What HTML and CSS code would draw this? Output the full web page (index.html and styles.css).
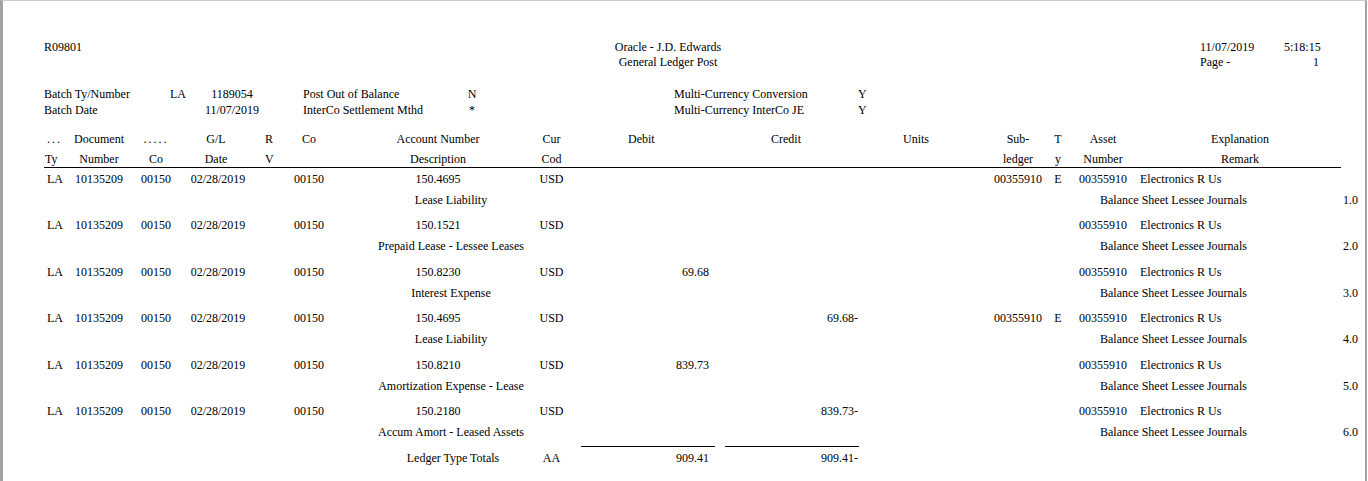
FILE: index.html
```html
<!DOCTYPE html>
<html>
<head>
<meta charset="utf-8">
<title>General Ledger Post</title>
<link rel="stylesheet" href="styles.css">
</head>
<body>
<div class="page">
  <header class="rpt-head">
    <div class="rh-left">R09801</div>
    <div class="rh-center">
      <div>Oracle - J.D. Edwards</div>
      <div>General Ledger Post</div>
    </div>
    <div class="rh-right">
      <span>11/07/2019</span><span>5:18:15</span>
      <span>Page -</span><span class="pg">1</span>
    </div>
  </header>

  <section class="batch">
    <span>Batch Ty/Number</span><span class="bty">LA</span><span class="c">1189054</span><span></span>
    <span>Post Out of Balance</span><span class="c">N</span><span></span>
    <span>Multi-Currency Conversion</span><span>Y</span>
    <span>Batch Date</span><span></span><span class="c">11/07/2019</span><span></span>
    <span>InterCo Settlement Mthd</span><span class="c">*</span><span></span>
    <span>Multi-Currency InterCo JE</span><span>Y</span>
  </section>

  <section class="report">
    <div class="thead">
      <div class="row r1">
        <span class="ty dots">...</span><span class="doc">Document</span><span class="co dots">.....</span><span class="dt">G/L</span><span class="rv">R</span><span class="co2">Co</span><span class="acct">Account Number</span><span class="cur">Cur</span><span class="dr">Debit</span><span class="cr">Credit</span><span class="un">Units</span><span class="sub">Sub-</span><span class="t">T</span><span class="as">Asset</span><span class="ex">Explanation</span>
      </div>
      <div class="row r2">
        <span class="ty">Ty</span><span class="doc">Number</span><span class="co">Co</span><span class="dt">Date</span><span class="rv">V</span><span class="co2"></span><span class="acct">Description</span><span class="cur">Cod</span><span class="dr"></span><span class="cr"></span><span class="un"></span><span class="sub">ledger</span><span class="t">y</span><span class="as">Number</span><span class="ex">Remark</span>
      </div>
    </div>

    <div class="records">
      <div class="rec">
        <div class="row l1"><span class="ty">LA</span><span class="doc">10135209</span><span class="co">00150</span><span class="dt">02/28/2019</span><span class="rv"></span><span class="co2">00150</span><span class="acct">150.4695</span><span class="cur">USD</span><span class="dr"></span><span class="cr"></span><span class="un"></span><span class="sub">00355910</span><span class="t">E</span><span class="as">00355910</span><span class="ex">Electronics R Us</span></div>
        <div class="l2"><span></span><span class="desc">Lease Liability</span><span></span><span>Balance Sheet Lessee Journals</span><span class="seq">1.0</span></div>
      </div>
      <div class="rec">
        <div class="row l1"><span class="ty">LA</span><span class="doc">10135209</span><span class="co">00150</span><span class="dt">02/28/2019</span><span class="rv"></span><span class="co2">00150</span><span class="acct">150.1521</span><span class="cur">USD</span><span class="dr"></span><span class="cr"></span><span class="un"></span><span class="sub"></span><span class="t"></span><span class="as">00355910</span><span class="ex">Electronics R Us</span></div>
        <div class="l2"><span></span><span class="desc">Prepaid Lease - Lessee Leases</span><span></span><span>Balance Sheet Lessee Journals</span><span class="seq">2.0</span></div>
      </div>
      <div class="rec">
        <div class="row l1"><span class="ty">LA</span><span class="doc">10135209</span><span class="co">00150</span><span class="dt">02/28/2019</span><span class="rv"></span><span class="co2">00150</span><span class="acct">150.8230</span><span class="cur">USD</span><span class="dr">69.68</span><span class="cr"></span><span class="un"></span><span class="sub"></span><span class="t"></span><span class="as">00355910</span><span class="ex">Electronics R Us</span></div>
        <div class="l2"><span></span><span class="desc">Interest Expense</span><span></span><span>Balance Sheet Lessee Journals</span><span class="seq">3.0</span></div>
      </div>
      <div class="rec">
        <div class="row l1"><span class="ty">LA</span><span class="doc">10135209</span><span class="co">00150</span><span class="dt">02/28/2019</span><span class="rv"></span><span class="co2">00150</span><span class="acct">150.4695</span><span class="cur">USD</span><span class="dr"></span><span class="cr">69.68-</span><span class="un"></span><span class="sub">00355910</span><span class="t">E</span><span class="as">00355910</span><span class="ex">Electronics R Us</span></div>
        <div class="l2"><span></span><span class="desc">Lease Liability</span><span></span><span>Balance Sheet Lessee Journals</span><span class="seq">4.0</span></div>
      </div>
      <div class="rec">
        <div class="row l1"><span class="ty">LA</span><span class="doc">10135209</span><span class="co">00150</span><span class="dt">02/28/2019</span><span class="rv"></span><span class="co2">00150</span><span class="acct">150.8210</span><span class="cur">USD</span><span class="dr">839.73</span><span class="cr"></span><span class="un"></span><span class="sub"></span><span class="t"></span><span class="as">00355910</span><span class="ex">Electronics R Us</span></div>
        <div class="l2"><span></span><span class="desc">Amortization Expense - Lease</span><span></span><span>Balance Sheet Lessee Journals</span><span class="seq">5.0</span></div>
      </div>
      <div class="rec">
        <div class="row l1"><span class="ty">LA</span><span class="doc">10135209</span><span class="co">00150</span><span class="dt">02/28/2019</span><span class="rv"></span><span class="co2">00150</span><span class="acct">150.2180</span><span class="cur">USD</span><span class="dr"></span><span class="cr">839.73-</span><span class="un"></span><span class="sub"></span><span class="t"></span><span class="as">00355910</span><span class="ex">Electronics R Us</span></div>
        <div class="l2"><span></span><span class="desc">Accum Amort - Leased Assets</span><span></span><span>Balance Sheet Lessee Journals</span><span class="seq">6.0</span></div>
      </div>
    </div>

    <div class="row tot">
      <span class="ty"></span><span class="doc"></span><span class="co"></span><span class="dt"></span><span class="rv"></span><span class="co2"></span><span class="acct">Ledger Type Totals</span><span class="cur">AA</span><span class="dr sum">909.41</span><span class="cr sum">909.41-</span><span class="un"></span><span class="sub"></span><span class="t"></span><span class="as"></span><span class="ex"></span>
    </div>
  </section>
</div>
</body>
</html>
```

FILE: styles.css
```css
* {
  box-sizing: border-box;
  margin: 0;
  padding: 0;
}

html,
body {
  background: #ffffff;
}

body {
  font-family: "Liberation Serif", "Times New Roman", serif;
  font-size: 12px;
  color: #000000;
}

.page {
  width: 1367px;
  height: 481px;
  border-top: 1px solid #cbcbcb;
  border-left: 3px solid #a3a3a3;
  border-right: 2px solid #a3a3a3;
  padding: 39px 0 0 41px;
  overflow: hidden;
}

/* report heading */
.rpt-head {
  display: grid;
  grid-template-columns: 520px 208px auto;
  line-height: 15px;
}

.rh-center {
  text-align: center;
}

.rh-right {
  display: grid;
  grid-template-columns: 84px auto;
  margin-left: 428px;
}

.pg {
  padding-left: 29px;
}

/* batch info */
.batch {
  display: grid;
  grid-template-columns: 124px 32px 64px 39px 160px 18px 193px 184px auto;
  line-height: 16px;
  margin-top: 16px;
}

.bty {
  padding-left: 2px;
}

.c {
  text-align: center;
}

/* detail table */
.report {
  margin-top: 13px;
}

.row {
  display: grid;
  grid-template-columns: 26px 58px 56px 68px 28px 58px 200px 27px 151px 143px 131px 56px 24px 66px 205px;
  line-height: 16px;
  white-space: nowrap;
}

.thead {
  width: 1297px;
  border-bottom: 1px solid #000000;
}

.thead .r1 {
  height: 20px;
}

.thead .r2 {
  height: 16px;
}

.ty {
  padding-left: 3px;
}

.thead .r2 .ty {
  padding-left: 1px;
}

.doc,
.co,
.dt,
.co2,
.acct,
.cur,
.sub,
.t,
.as {
  text-align: center;
}

.rv {
  padding-left: 13px;
}

.dr {
  text-align: right;
  padding-right: 7px;
}

.cr {
  text-align: right;
  padding-right: 1px;
}

.ex {
  padding-left: 4px;
}

.dots {
  letter-spacing: 2px;
}

.thead .dt {
  padding-right: 4px;
}

.thead .dr {
  text-align: left;
  padding-left: 63px;
}

.thead .cr {
  text-align: left;
  padding-left: 55px;
}

.thead .un {
  padding-left: 44px;
}

.thead .ex {
  text-align: center;
  padding-left: 3px;
}

.records {
  display: flex;
  flex-direction: column;
  row-gap: 9.4px;
  margin-top: 3px;
}

.rec .l1 {
  height: 21px;
}

.l2 {
  display: grid;
  grid-template-columns: 294px 226px 536px 200px 58px;
  line-height: 16px;
  white-space: nowrap;
}

.desc {
  text-align: center;
}

.seq {
  text-align: right;
}

/* totals */
.tot {
  margin-top: 6px;
  width: 1297px;
}

.tot > span {
  padding-top: 4px;
}

.tot .acct {
  padding-left: 30px;
}

.tot .sum {
  border-top: 1px solid #000000;
  padding-top: 3px;
}

.tot .dr.sum {
  margin-left: 16px;
  margin-right: 1px;
  padding-right: 6px;
}

.tot .cr.sum {
  margin-left: 9px;
}
```
